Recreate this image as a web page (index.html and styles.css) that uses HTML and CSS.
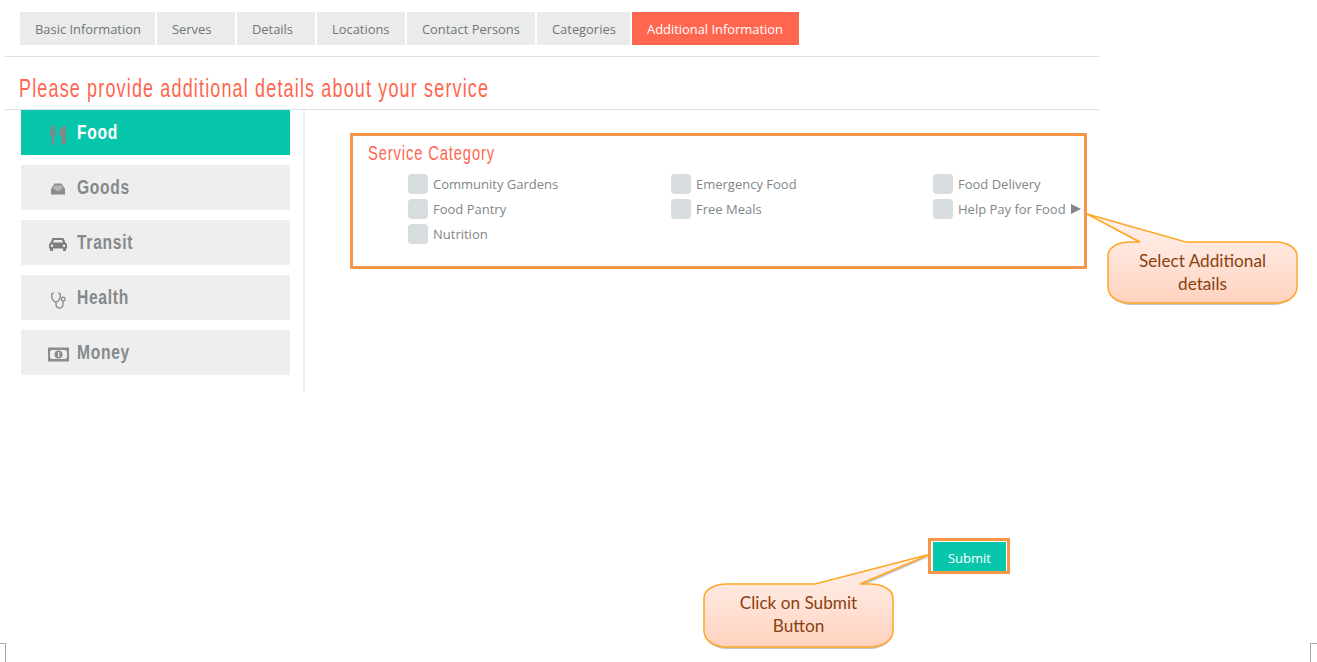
FILE: index.html
```html
<!DOCTYPE html>
<html lang="en">

<head>
  <meta charset="UTF-8" />
  <title>Additional Information</title>
  <link rel="stylesheet" href="styles.css">
</head>

<body>
  <div class="page">
    <ul class="tabs">
      <li class="tab tab-basic">Basic Information</li>
      <li class="tab tab-serves">Serves</li>
      <li class="tab tab-details">Details</li>
      <li class="tab tab-locations">Locations</li>
      <li class="tab tab-contact">Contact Persons</li>
      <li class="tab tab-categories">Categories</li>
      <li class="tab tab-additional active">Additional Information</li>
    </ul>

    <h1 class="page-title"><span class="narrow">Please provide additional details about your service</span></h1>

    <div class="content">
      <div class="sidebar">
        <a class="side-item active">
          <svg class="side-icon" viewBox="0 0 21 24"><path d="M2 4.500h1.200v6h1v-6h1.200v6h1v-6h1.200v8c0 1-.7 1.700-1.500 2v9H3.500v-9c-.8-.3-1.500-1-1.500-2zM17.700 4.500c-3.200.5-6.200 3-6.200 8v2.500h2v8.500h4.200z" fill="#868686"/></svg>
          <span class="side-label">Food</span>
        </a>
        <a class="side-item">
          <svg class="side-icon" viewBox="0 0 21 24"><path d="M6.500 7.500h7L17 13v5.500H3V13z" fill="#8c8c8c"/><path d="M6.500 9.500h7l1.700 3.500H13l-1 2H8l-1-2H4.800z" fill="#b4b4b4"/></svg>
          <span class="side-label">Goods</span>
        </a>
        <a class="side-item">
          <svg class="side-icon" viewBox="0 0 21 24"><path transform="translate(1 3.500)" d="M4.500 3.500h9c.8 0 1.300.5 1.600 1.200L16.300 8c1 .5 1.700 1.300 1.700 2.500V14h-1v2.500h-3V14H4v2.500H1V14H0v-3.500C0 9.300.7 8.500 1.700 8l1.200-3.300c.3-.7.800-1.200 1.600-1.200zM5 5.500 4 8h10l-1-2.500zM3 10a1.300 1.300 0 1 0 0 2.600A1.300 1.300 0 0 0 3 10zm12 0a1.300 1.300 0 1 0 0 2.600 1.300 1.300 0 0 0 0-2.600z" fill="#7d7d7d" fill-rule="evenodd"/></svg>
          <span class="side-label">Transit</span>
        </a>
        <a class="side-item">
          <svg class="side-icon" viewBox="0 0 21 24"><path d="M6 7.200H5C4 7.200 3.600 7.700 3.600 8.700c0 3.500 1.500 6.500 4.400 7.500 2.900-1 4.400-4 4.400-7.500 0-1-.4-1.500-1.400-1.500h-1M8 16.200V18c0 2.500 1.500 4 3.500 4s3.500-1.500 3.500-4v-3" fill="none" stroke="#8a8a8a" stroke-width="1.300"/><circle cx="15.200" cy="13" r="1.900" fill="none" stroke="#8a8a8a" stroke-width="1.200"/></svg>
          <span class="side-label">Health</span>
        </a>
        <a class="side-item">
          <svg class="side-icon" viewBox="0 0 21 24"><path d="M0 6.500h21v14H0zM3.500 9 2 10.500v6L3.500 18h14l1.500-1.500v-6L17.500 9z" fill="#8c8c8c" fill-rule="evenodd"/><circle cx="10.500" cy="13.500" r="4" fill="#8c8c8c"/><rect x="10" y="11" width="1.300" height="5" fill="#eee"/></svg>
          <span class="side-label">Money</span>
        </a>
      </div>

      <div class="main">
        <div class="category-box">
          <h2 class="category-title"><span class="narrow">Service Category</span></h2>
          <div class="options">
            <label class="option"><span class="checkbox"></span>Community Gardens</label>
            <label class="option"><span class="checkbox"></span>Emergency Food</label>
            <label class="option"><span class="checkbox"></span>Food Delivery</label>
            <label class="option"><span class="checkbox"></span>Food Pantry</label>
            <label class="option"><span class="checkbox"></span>Free Meals</label>
            <label class="option"><span class="checkbox"></span>Help Pay for Food<span class="arrow"></span></label>
            <label class="option"><span class="checkbox"></span>Nutrition</label>
          </div>
        </div>
      </div>
    </div>

    <div class="form-footer">
      <div class="submit-mark"><button class="submit-btn">Submit</button></div>
    </div>
  </div>

  <!-- annotations drawn over the page -->
  <div class="callout callout-details">
    <svg class="callout-shape" width="215" height="96" viewBox="1085 212 215 96">
      <defs>
        <linearGradient id="calloutFill" x1="0" y1="0" x2="0" y2="1">
          <stop offset="0" stop-color="#fff1ec" />
          <stop offset="0.55" stop-color="#ffe2d6" />
          <stop offset="1" stop-color="#ffd2be" />
        </linearGradient>
      </defs>
      <path d="M1087 214 1141 244H1132C1118 244 1108 250 1108 258V288C1108 297 1118 305 1132 305H1273C1287 305 1297 297 1297 288V258C1297 250 1287 244 1273 244H1186z" fill="#999" opacity=".55" />
      <path d="M1087 214 1140 242H1130C1117 242 1108 248 1108 256V287C1108 296 1117 303 1130 303H1275C1288 303 1297 296 1297 287V256C1297 248 1288 242 1275 242H1186z" fill="url(#calloutFill)" stroke="#ffa726" stroke-width="1.500" />
    </svg>
    <span class="callout-text">Select Additional<br>details</span>
  </div>

  <div class="callout callout-submit">
    <svg class="callout-shape" width="232" height="98" viewBox="702 552 232 98">
      <path d="M931 556 862 586H870C883 586 893 592 893 600V632C893 641 883 649 870 649H727C714 649 704 641 704 632V600C704 592 714 586 727 586H815z" fill="#999" opacity=".55" />
      <path d="M931 554 860 584H870C883 584 893 590 893 598V631C893 640 883 647 870 647H727C714 647 704 640 704 631V598C704 590 714 584 727 584H815z" fill="url(#calloutFill)" stroke="#ffa726" stroke-width="1.500" />
    </svg>
    <span class="callout-text">Click on Submit<br>Button</span>
  </div>

  <!-- page corner marks -->
  <div class="corner corner-left"></div>
  <div class="corner corner-right"></div>
</body>

</html>
```

FILE: styles.css
```css
body {
  margin: 0;
  background-color: white;
  font-family: "Open Sans", "Noto Sans", sans-serif;
}

.page {
  width: 1094px;
  margin-left: 5px;
}

/* no condensed font installed, so squeeze the sans one */
.narrow {
  display: inline-block;
  transform: scaleX(0.72);
  transform-origin: left center;
  white-space: nowrap;
}

/* Tabs */
.tabs {
  display: flex;
  gap: 2px;
  list-style-type: none;
  margin: 0;
  padding: 12px 0 11px 15px;
  border-bottom: 1px solid #d5e3e8;
}

.tab {
  height: 33px;
  padding-left: 15px;
  box-sizing: border-box;
  line-height: 35px;
  font-size: 12.900px;
  color: #6e7678;
  background-color: #ebebeb;
}

.tab-basic { width: 135px; }
.tab-serves { width: 78px; }
.tab-details { width: 78px; }
.tab-locations { width: 88px; }
.tab-contact { width: 128px; }
.tab-categories { width: 93px; }
.tab-additional { width: 167px; }

.tab.active {
  color: white;
  background-color: #ff6650;
}

.page-title {
  margin: 0;
  height: 52px;
  padding-left: 14px;
  line-height: 63px;
  font-family: "Liberation Sans", sans-serif;
  font-size: 25px;
  font-weight: 400;
  letter-spacing: 1.600px;
  color: #ff6650;
  border-bottom: 1px solid #d5e3e8;
}

.content {
  display: flex;
}

/* Sidebar */
.sidebar {
  width: 269px;
  height: 282px;
  padding: 0 13px 0 16px;
  border-right: 2px solid #eeeeee;
  flex-shrink: 0;
}

.side-item {
  display: flex;
  align-items: center;
  height: 45px;
  width: 269px;
  margin-bottom: 10px;
  padding-left: 27px;
  box-sizing: border-box;
  font-family: "Liberation Sans", sans-serif;
  font-size: 20px;
  font-weight: 700;
  letter-spacing: 0.900px;
  color: #85898b;
  background-color: #eeeeee;
}

.side-item.active {
  color: white;
  background-color: #07c6ac;
}

.side-icon {
  width: 21px;
  height: 24px;
  margin-right: 8px;
  flex-shrink: 0;
}

.side-label {
  display: inline-block;
  transform: scaleX(0.78);
  transform-origin: left center;
}

/* Service category */
.main {
  flex: 1;
  padding: 23px 0 0 45px;
}

.category-box {
  width: 737px;
  height: 136px;
  padding: 6px 0 0 15px;
  border: 3px solid #f79646;
  box-sizing: border-box;
}

.category-title {
  margin: 0 0 9px 0;
  height: 23px;
  line-height: 21px;
  font-family: "Liberation Sans", sans-serif;
  font-size: 20.500px;
  font-weight: 400;
  letter-spacing: 1.200px;
  color: #ff6650;
}

.options {
  display: grid;
  grid-template-columns: 263px 262px auto;
  grid-auto-rows: 25px;
  padding-left: 40px;
}

.option {
  display: flex;
  align-items: center;
  height: 20px;
  font-size: 13px;
  color: #7f8789;
  white-space: nowrap;
}

.checkbox {
  width: 20px;
  height: 20px;
  margin-right: 5px;
  border-radius: 4px;
  background-color: #d7dcde;
}

.arrow {
  width: 0;
  height: 0;
  margin-left: 5px;
  border-left: 10px solid #85868a;
  border-top: 5px solid transparent;
  border-bottom: 5px solid transparent;
}

/* Submit */
.form-footer {
  display: flex;
  justify-content: flex-end;
  padding: 146px 89px 0 0;
}

.submit-mark {
  padding: 1px 1px 0 2px;
  background-color: white;
  border: 3px solid #f79646;
}

.submit-btn {
  display: block;
  width: 73px;
  height: 29px;
  padding: 2px 0 0 0;
  border: none;
  font-family: "Open Sans", "Noto Sans", sans-serif;
  font-size: 13px;
  color: white;
  background-color: #07c6ac;
}

/* Callouts */
.callout {
  position: absolute;
}

.callout-details {
  left: 1085px;
  top: 212px;
  width: 215px;
  height: 96px;
}

.callout-submit {
  left: 702px;
  top: 552px;
  width: 232px;
  height: 98px;
}

.callout-shape {
  display: block;
}

.callout-text {
  position: absolute;
  text-align: center;
  font-family: "Lato", "Liberation Sans", sans-serif;
  font-size: 17.200px;
  line-height: 23px;
  color: #8a3f10;
}

.callout-details .callout-text {
  left: 23px;
  top: 37px;
  width: 189px;
}

.callout-submit .callout-text {
  left: 2px;
  top: 39px;
  width: 189px;
}

/* Corner marks */
.corner {
  position: absolute;
  top: 643px;
  width: 6px;
  height: 19px;
  border-top: 1px solid #a6a6a6;
  box-sizing: border-box;
}

.corner-left {
  left: 0;
  border-right: 1px solid #a6a6a6;
}

.corner-right {
  left: 1310px;
  width: 7px;
  border-left: 1px solid #a6a6a6;
}
```
